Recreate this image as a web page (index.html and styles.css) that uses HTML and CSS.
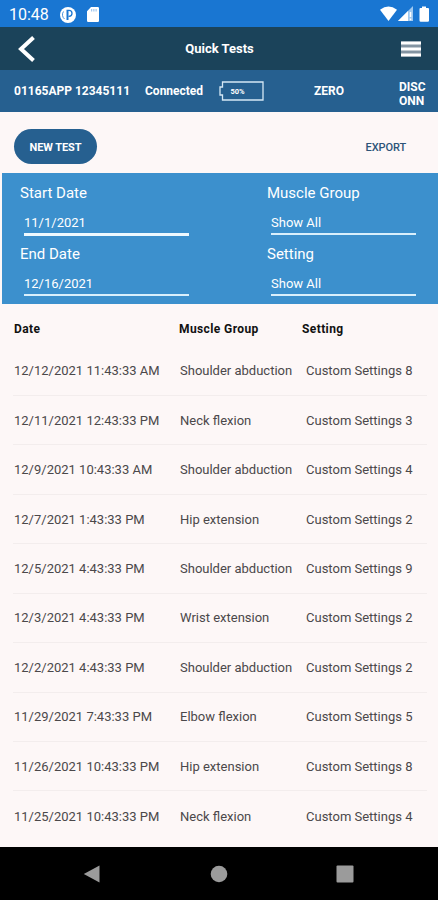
FILE: index.html
```html
<!DOCTYPE html>
<html lang="en">
<head>
    <meta charset="UTF-8">
    <meta name="viewport" content="width=device-width, initial-scale=1.0">
    <title>Quick Tests</title>
    <link rel="stylesheet" href="styles.css">
</head>
<body>
    <div class="status-bar">
        <span class="clock">10:48</span>
        <svg class="status-app" width="16" height="16" viewBox="0 0 16 16">
            <circle cx="8" cy="8" r="8" fill="#fff"/>
            <path d="M7.500 13V4" fill="none" stroke="#1976d2" stroke-width="2"/>
            <path d="M6.500 3.300H9a3 3 0 0 1 0 6H8.500" fill="none" stroke="#1976d2" stroke-width="1.300"/>
            <path d="M3.500 4.500a5.500 5.500 0 0 0 1 7.500" fill="none" stroke="#1976d2" stroke-width=".8"/>
        </svg>
        <svg class="status-card" width="12" height="15" viewBox="0 0 12 15">
            <path d="M4 0h6.800A1.200 1.200 0 0 1 12 1.200v12.600a1.200 1.200 0 0 1-1.200 1.200H1.200A1.200 1.200 0 0 1 0 13.800V4.200z" fill="#fff"/>
            <path d="M4.700 2v2.500M6.900 2v2.500M9.100 2v2.500" stroke="#8dbbea" stroke-width="1"/>
        </svg>
        <svg class="status-right" width="50" height="17" viewBox="0 0 50 17">
            <path d="M0 3.700Q8.500-2.500 17 3.700L8.500 15z" fill="#fff"/>
            <path d="M33 0V15H18z" fill="#9fc8ef"/>
            <path d="M28 5V15H18z" fill="#fff"/>
            <path d="M30.500 6v5M30.500 12.500v1.700" stroke="#fff" stroke-width="1.500"/>
            <path d="M42 .6h4V2h2a1 1 0 0 1 1 1v11.500a1.300 1.300 0 0 1-1.300 1.300h-6.900A1.300 1.300 0 0 1 39.500 14.500V3a1 1 0 0 1 1-1H42z" fill="#fff"/>
        </svg>
    </div>

    <header class="header">
        <svg class="back" width="18" height="28" viewBox="0 0 18 28">
            <path d="M15.500 2.500L3 14l12.500 11.500" fill="none" stroke="#fff" stroke-width="4"/>
        </svg>
        <h1>Quick Tests</h1>
        <svg class="menu" width="20" height="16" viewBox="0 0 20 16">
            <path d="M0 .5h20v15H0z" fill="#8394a2"/>
            <path d="M0 2h20M0 8h20M0 14h20" stroke="#fff" stroke-width="3"/>
        </svg>
    </header>

    <div class="device">
        <span class="device-name">01165APP 12345111</span>
        <span class="device-state">Connected</span>
        <svg class="battery" width="45" height="20" viewBox="0 0 45 20">
            <path d="M3.500 1H44v18H3.500V14H1V6h2.500z" fill="none" stroke="#d5e8f5" stroke-width="1.300"/>
            <text x="11.500" y="13">50%</text>
        </svg>
        <span class="zero">ZERO</span>
        <span class="disconnect">DISC<br>ONN</span>
    </div>

    <div class="actions">
        <button class="new-test">NEW TEST</button>
        <button class="export">EXPORT</button>
    </div>

    <div class="filters">
        <div class="field">
            <label>Start Date</label>
            <div class="value thick">11/1/2021</div>
        </div>
        <div class="field">
            <label>Muscle Group</label>
            <div class="value">Show All</div>
        </div>
        <div class="field">
            <label>End Date</label>
            <div class="value">12/16/2021</div>
        </div>
        <div class="field">
            <label>Setting</label>
            <div class="value">Show All</div>
        </div>
    </div>

    <main class="tests">
        <div class="row head"><span>Date</span><span>Muscle Group</span><span>Setting</span></div>
        <div class="row"><span>12/12/2021 11:43:33 AM</span><span>Shoulder abduction</span><span>Custom Settings 8</span></div>
        <div class="row"><span>12/11/2021 12:43:33 PM</span><span>Neck flexion</span><span>Custom Settings 3</span></div>
        <div class="row"><span>12/9/2021 10:43:33 AM</span><span>Shoulder abduction</span><span>Custom Settings 4</span></div>
        <div class="row"><span>12/7/2021 1:43:33 PM</span><span>Hip extension</span><span>Custom Settings 2</span></div>
        <div class="row"><span>12/5/2021 4:43:33 PM</span><span>Shoulder abduction</span><span>Custom Settings 9</span></div>
        <div class="row"><span>12/3/2021 4:43:33 PM</span><span>Wrist extension</span><span>Custom Settings 2</span></div>
        <div class="row"><span>12/2/2021 4:43:33 PM</span><span>Shoulder abduction</span><span>Custom Settings 2</span></div>
        <div class="row"><span>11/29/2021 7:43:33 PM</span><span>Elbow flexion</span><span>Custom Settings 5</span></div>
        <div class="row"><span>11/26/2021 10:43:33 PM</span><span>Hip extension</span><span>Custom Settings 8</span></div>
        <div class="row"><span>11/25/2021 10:43:33 PM</span><span>Neck flexion</span><span>Custom Settings 4</span></div>
    </main>

    <nav class="nav-bar">
        <svg width="18" height="18" viewBox="0 0 18 18"><path d="M16.500 .5v17L.8 9z" fill="#9b9b9b"/></svg>
        <svg width="18" height="18" viewBox="0 0 18 18"><circle cx="9" cy="9" r="8.300" fill="#9b9b9b"/></svg>
        <svg width="18" height="18" viewBox="0 0 18 18"><rect x=".5" y=".5" width="17" height="17" rx="1" fill="#9b9b9b"/></svg>
    </nav>
</body>
</html>
```
FILE: styles.css
```css
* {
    box-sizing: border-box;
}

body {
    margin: 0;
    height: 900px;
    display: flex;
    flex-direction: column;
    overflow: hidden;
    font-family: Roboto, sans-serif;
    background-color: #fdf7f7;
    color: #fff;
}

.status-bar {
    height: 27px;
    padding: 2px 8px 0 9px;
    display: flex;
    align-items: center;
    background-color: #1976d2;
}

.clock {
    width: 51px;
    font-size: 16px;
}

.status-card {
    margin-left: 11px;
}

.status-right {
    margin-left: auto;
}

.header {
    height: 43px;
    padding: 0 17px 0 18px;
    display: flex;
    align-items: center;
    justify-content: space-between;
    background-color: #1b435a;
}

h1 {
    margin: 0 0 0 2px;
    font-size: 13px;
    font-weight: 700;
}

.device {
    height: 42px;
    padding-left: 14px;
    display: grid;
    grid-template-columns: 131px 74px 95px 85px 1fr;
    align-items: center;
    overflow: hidden;
    font-size: 12px;
    font-weight: 700;
    background-color: #266090;
}

.battery text {
    font-size: 7.5px;
    font-weight: 700;
    fill: #fff;
}

.disconnect {
    height: 25px;
    margin-top: 3px;
    overflow: hidden;
    line-height: 14px;
}

.actions {
    height: 61px;
    padding: 8px 32px 0 14px;
    display: flex;
    align-items: center;
    justify-content: space-between;
}

button {
    padding: 2px 0 0;
    border: none;
    background: none;
    font-family: inherit;
    font-size: 11px;
    font-weight: 700;
    letter-spacing: -0.1px;
}

.new-test {
    width: 83px;
    height: 35px;
    border-radius: 18px;
    background-color: #266090;
    color: #fff;
}

.export {
    color: #2d5378;
    font-weight: 500;
}

.filters {
    height: 131px;
    margin-left: 2px;
    padding: 9px 22px 0 18px;
    display: grid;
    grid-template-columns: 247px 1fr;
    grid-auto-rows: 61px;
    background-color: #3c90cd;
}

.field label {
    display: block;
    height: 22px;
    font-size: 15px;
    line-height: 22px;
}

.value {
    height: 31px;
    margin-left: 4px;
    padding-top: 10px;
    border-bottom: 2px solid #d9effc;
    font-size: 13px;
    line-height: 18px;
}

.field:nth-child(odd) .value {
    width: 165px;
}

.thick {
    height: 32px;
    border-bottom: 3px solid #eef9ff;
}

.tests {
    height: 543px;
    padding: 0 11px 0 13px;
}

.row {
    height: 49.45px;
    padding-left: 1px;
    display: grid;
    grid-template-columns: 166px 126px 1fr;
    align-items: center;
    border-bottom: 1px solid #f3eded;
    color: #4b484a;
    font-size: 13px;
    font-weight: 400;
    white-space: nowrap;
}

.row:last-child {
    border-bottom: none;
}

.row.head {
    height: 42.5px;
    padding-top: 7px;
    grid-template-columns: 165px 123px 1fr;
    border-bottom: none;
    color: #111;
    font-size: 12px;
    font-weight: 700;
    letter-spacing: 0.4px;
}

.nav-bar {
    height: 53px;
    display: flex;
    align-items: center;
    justify-content: space-between;
    padding: 0 84px 0 83px;
    background-color: #000;
}
```
